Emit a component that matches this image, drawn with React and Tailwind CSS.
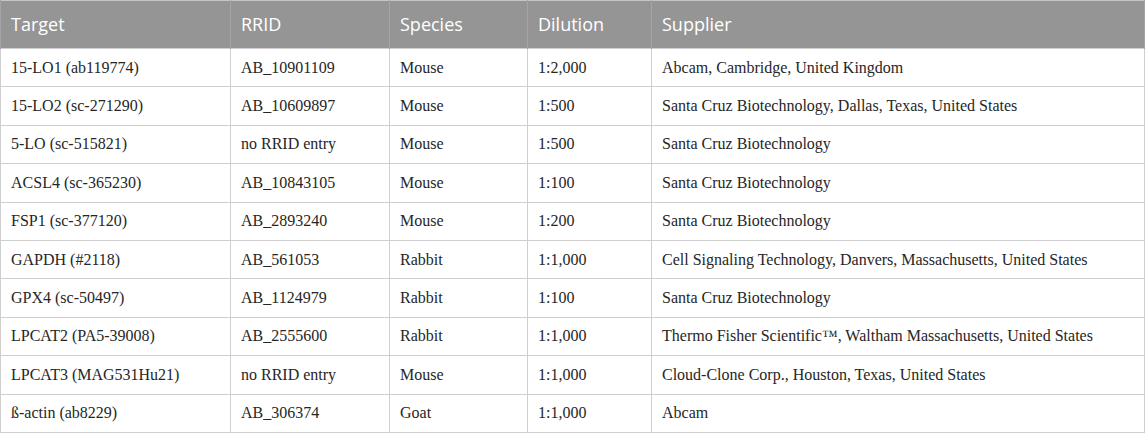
import React from "react";

const rows = [
  ["15-LO1 (ab119774)", "AB_10901109", "Mouse", "1:2,000", "Abcam, Cambridge, United Kingdom"],
  ["15-LO2 (sc-271290)", "AB_10609897", "Mouse", "1:500", "Santa Cruz Biotechnology, Dallas, Texas, United States"],
  ["5-LO (sc-515821)", "no RRID entry", "Mouse", "1:500", "Santa Cruz Biotechnology"],
  ["ACSL4 (sc-365230)", "AB_10843105", "Mouse", "1:100", "Santa Cruz Biotechnology"],
  ["FSP1 (sc-377120)", "AB_2893240", "Mouse", "1:200", "Santa Cruz Biotechnology"],
  ["GAPDH (#2118)", "AB_561053", "Rabbit", "1:1,000", "Cell Signaling Technology, Danvers, Massachusetts, United States"],
  ["GPX4 (sc-50497)", "AB_1124979", "Rabbit", "1:100", "Santa Cruz Biotechnology"],
  ["LPCAT2 (PA5-39008)", "AB_2555600", "Rabbit", "1:1,000", "Thermo Fisher Scientific\u2122, Waltham Massachusetts, United States"],
  ["LPCAT3 (MAG531Hu21)", "no RRID entry", "Mouse", "1:1,000", "Cloud-Clone Corp., Houston, Texas, United States"],
  ["\u00df-actin (ab8229)", "AB_306374", "Goat", "1:1,000", "Abcam"],
];

const headers = ["Target", "RRID", "Species", "Dilution", "Supplier"];

export default function App() {
  return (
    <div className="w-[1145px] h-[433px] bg-white">
      <table className="w-[1145px] table-fixed border-collapse border border-[#c4c4c4]">
        <colgroup>
          <col className="w-[230px]" />
          <col className="w-[159px]" />
          <col className="w-[138px]" />
          <col className="w-[124px]" />
          <col />
        </colgroup>
        <thead>
          <tr className="h-[48px] bg-[#959595]">
            {headers.map((h) => (
              <th
                key={h}
                className="border-x border-[#a5a5a5] px-[10px] text-left align-middle text-[18px] font-normal text-white font-['Open_Sans',sans-serif]"
              >
                {h}
              </th>
            ))}
          </tr>
        </thead>
        <tbody>
          {rows.map((r, i) => (
            <tr key={i} className="h-[38.4px]">
              {r.map((c, j) => (
                <td
                  key={j}
                  className="border border-[#cfcfcf] px-[10px] align-middle text-[16px] leading-none text-[#262626] font-['Liberation_Serif',serif] whitespace-nowrap"
                >
                  {c}
                </td>
              ))}
            </tr>
          ))}
        </tbody>
      </table>
    </div>
  );
}
